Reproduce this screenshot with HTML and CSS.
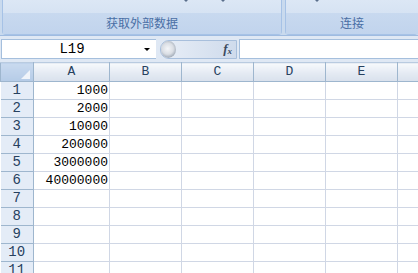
FILE: index.html
```html
<!DOCTYPE html>
<html lang="zh-CN">
<head>
    <meta charset="UTF-8">
    <title>Excel - 工作表</title>
    <link rel="stylesheet" href="styles.css">
</head>
<body>

<!-- Ruban -->
<div class="ribbon">
    <div class="group group-data">
        <div class="group-body">
            <span class="drop" style="left: 181px"></span>
            <span class="drop" style="left: 218px"></span>
        </div>
        <div class="group-label">获取外部数据</div>
    </div>
    <div class="group group-conn">
        <div class="group-body">
            <span class="drop" style="left: 29px"></span>
        </div>
        <div class="group-label">连接</div>
    </div>
</div>

<!-- Barre de formule -->
<div class="formula-bar">
    <div class="name-box">
        <span class="name">L19</span>
        <span class="arrow"></span>
    </div>
    <div class="fx-btn">
        <span class="knob"></span>
        <span class="fx">f<sub>x</sub></span>
    </div>
    <div class="formula-input"></div>
</div>

<!-- Feuille -->
<table class="sheet">
    <colgroup>
        <col class="c-head">
        <col class="c-a">
        <col class="c-std">
        <col class="c-std">
        <col class="c-std">
        <col class="c-std">
        <col>
    </colgroup>
    <thead>
        <tr>
            <th class="corner"><span class="tri"></span></th>
            <th>A</th><th>B</th><th>C</th><th>D</th><th>E</th><th></th>
        </tr>
    </thead>
    <tbody>
        <tr><th>1</th><td class="num">1000</td><td></td><td></td><td></td><td></td><td></td></tr>
        <tr><th>2</th><td class="num">2000</td><td></td><td></td><td></td><td></td><td></td></tr>
        <tr><th>3</th><td class="num">10000</td><td></td><td></td><td></td><td></td><td></td></tr>
        <tr><th>4</th><td class="num">200000</td><td></td><td></td><td></td><td></td><td></td></tr>
        <tr><th>5</th><td class="num">3000000</td><td></td><td></td><td></td><td></td><td></td></tr>
        <tr><th>6</th><td class="num">40000000</td><td></td><td></td><td></td><td></td><td></td></tr>
        <tr><th>7</th><td></td><td></td><td></td><td></td><td></td><td></td></tr>
        <tr><th>8</th><td></td><td></td><td></td><td></td><td></td><td></td></tr>
        <tr><th>9</th><td></td><td></td><td></td><td></td><td></td><td></td></tr>
        <tr><th>10</th><td></td><td></td><td></td><td></td><td></td><td></td></tr>
        <tr><th>11</th><td></td><td></td><td></td><td></td><td></td><td></td></tr>
    </tbody>
</table>

</body>
</html>
```

FILE: styles.css
```css
/* Style global */
body {
    margin: 0;
    padding: 0;
    width: 418px;
    height: 273px;
    overflow: hidden;
    background-color: #dbe5f1;
    font-family: "Liberation Mono", "Noto Sans CJK SC", monospace;
}

/* Ruban */
.ribbon {
    display: flex;
    height: 35px;
    background-color: #c9daee;
    border-bottom: 1px solid #9fbbe0;
}

.group {
    display: flex;
    flex-direction: column;
    border: 1px solid #a6c2e6;
    border-top: none;
    border-radius: 0 0 4px 4px;
    box-shadow: inset 1px 0 0 #eef4fb;
}

.group-data {
    width: 278px;
    margin-left: 2px;
}

.group-conn {
    flex: 1;
    margin-left: 3px;
    border-right: none;
}

.group-body {
    position: relative;
    height: 13px;
    background: linear-gradient(#dce7f5, #d6e3f3);
}

.drop {
    position: absolute;
    top: 0;
    width: 0;
    height: 0;
    border-left: 2px solid transparent;
    border-right: 2px solid transparent;
    border-top: 2px solid #5a6f8c;
}

.group-label {
    flex: 1;
    background: linear-gradient(#c8d9ef, #c1d4ed);
    color: #4a6fa5;
    font-family: "Noto Sans CJK SC", sans-serif;
    font-size: 12px;
    line-height: 20px;
    text-align: center;
}

/* Barre de formule */
.formula-bar {
    display: flex;
    align-items: center;
    height: 26px;
    padding: 0 0 0 1px;
    background-color: #dfe8f4;
}

.name-box {
    position: relative;
    width: 154px;
    height: 18px;
    background-color: #ffffff;
    border: 1px solid #a5bfdd;
    border-right: none;
}

.name {
    display: block;
    width: 140px;
    text-align: center;
    font-size: 14px;
    line-height: 18px;
    color: #000;
}

.arrow {
    position: absolute;
    right: 6px;
    top: 8px;
    width: 0;
    height: 0;
    border-left: 3px solid transparent;
    border-right: 3px solid transparent;
    border-top: 3px solid #000;
}

.fx-btn {
    display: flex;
    align-items: center;
    justify-content: flex-end;
    position: relative;
    width: 77px;
    height: 19px;
    margin-left: 4px;
    padding-right: 4px;
    background: linear-gradient(to right, #e8eef7, #cfdbec);
    border: 1px solid #a8bfdc;
    border-radius: 9px 0 0 9px;
    box-sizing: border-box;
}

.knob {
    position: absolute;
    left: 0;
    top: 0;
    width: 15px;
    height: 17px;
    border-radius: 50%;
    background: radial-gradient(circle at 45% 45%, #f4f6f9 0, #dadee4 45%, #a7b0bc 70%, #e6ebf1 85%);
}

.fx {
    font-family: "Liberation Serif", serif;
    font-style: italic;
    font-weight: bold;
    font-size: 13px;
    color: #3c4a5e;
}

.fx sub {
    font-size: 9px;
    vertical-align: -1px;
}

.formula-input {
    flex: 1;
    height: 18px;
    margin-left: 2px;
    background-color: #ffffff;
    border: 1px solid #a5bfdd;
    border-right: none;
}

/* Feuille */
.sheet {
    table-layout: fixed;
    border-collapse: collapse;
    width: 430px;
    background-color: #ffffff;
    font-size: 13px;
}

.c-head { width: 33px; }
.c-a { width: 76px; }
.c-std { width: 72px; }

.sheet thead th {
    height: 18px;
    padding: 0;
    font-weight: normal;
    font-size: 13px;
    line-height: 18px;
    color: #27415f;
    background: linear-gradient(#f7f9fc, #e4eaf3 55%, #d9e1ec);
    border: 1px solid #9eb6ce;
    border-top-color: #b9cbe0;
}

.sheet thead th.corner {
    position: relative;
    background: linear-gradient(#c9daef, #b5cbe7);
}

.tri {
    position: absolute;
    right: 3px;
    bottom: 2px;
    width: 0;
    height: 0;
    border-left: 9px solid transparent;
    border-bottom: 9px solid #f0f4fa;
}

.sheet tbody th {
    height: 17px;
    padding: 0;
    font-weight: normal;
    font-size: 14px;
    text-align: center;
    line-height: 17px;
    color: #27415f;
    background-color: #e4ecf7;
    border: 1px solid #9eb6ce;
    border-left: none;
}

.sheet td {
    height: 17px;
    padding: 0 1px 0 0;
    line-height: 17px;
    border: 1px solid #d0d7e5;
}

.num {
    text-align: right;
    color: #000;
}
```
